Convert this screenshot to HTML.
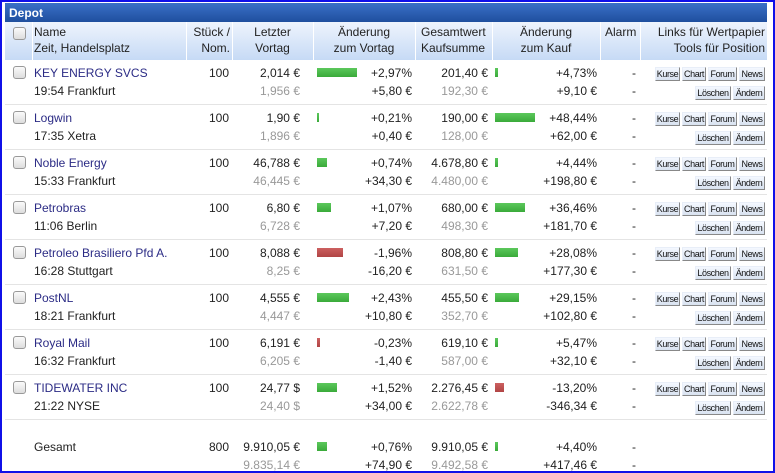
<!DOCTYPE html>
<html><head><meta charset="utf-8"><style>
*{margin:0;padding:0;box-sizing:border-box}
body{width:775px;height:473px;position:relative;overflow:hidden;background:#fff;font-family:"Liberation Sans",Arial,sans-serif;font-size:12px;color:#222}
#frame{position:absolute;left:0;top:0;width:775px;height:473px;border:2px solid #1010e8}
#bar{position:absolute;left:5px;top:3px;width:762px;height:19px;background:linear-gradient(#3a70c8,#1f4f9e);color:#fff;font-weight:bold;font-size:12px;padding:3px 4px}
#hd{position:absolute;left:5px;top:22px;width:762px;height:38px;background:linear-gradient(#eef4fd,#c6daf5)}
.hs{position:absolute;top:22px;height:38px;width:1px;background:#fff}
.a{position:absolute;white-space:nowrap;line-height:16px}
.r{text-align:right}.c{text-align:center}
.cb{position:absolute;width:13px;height:13px;border:1px solid #999;border-radius:3px;background:linear-gradient(#fafafa,#ddd)}
.sep{position:absolute;left:5px;width:762px;height:1px;background:#e4e4e4}
.nm{color:#2b2b85}
.g{color:#999}
.bg{position:absolute;height:9px;background:linear-gradient(#5cc85c,#3aaa3a)}
.br{position:absolute;height:9px;background:linear-gradient(#cc6060,#b04444)}
.bt{position:absolute;height:14px;font-size:9px;line-height:12px;text-align:center;overflow:visible;white-space:nowrap;border:1px solid #e8eef8;border-right-color:#888;border-bottom-color:#888;background:linear-gradient(#f4f8ff,#d8e2f0);color:#111;font-family:"Liberation Sans",sans-serif;letter-spacing:-0.4px}
.bt[style*="left:655px"]{width:25px}
.bt[style*="left:682px"]{width:24px}
.bt[style*="left:708px"]{width:29px}
.bt[style*="left:739px"]{width:26px}
.bt[style*="left:695px"]{width:36px}
.bt[style*="left:733px"]{width:32px}
.dash{position:absolute;left:628px;width:12px;text-align:center}
</style></head><body>
<div id="frame"></div>
<div id="bar">Depot</div>
<div id="hd"></div>
<div class="hs" style="left:32px"></div><div class="hs" style="left:186px"></div><div class="hs" style="left:232px"></div><div class="hs" style="left:313px"></div><div class="hs" style="left:415px"></div><div class="hs" style="left:492px"></div><div class="hs" style="left:600px"></div><div class="hs" style="left:640px"></div>
<div class="cb" style="left:13px;top:27px"></div>
<div class="a" style="left:34px;top:24px">Name<br>Zeit, Handelsplatz</div>
<div class="a r" style="left:186px;width:44px;top:24px">Stück /<br>Nom.</div>
<div class="a c" style="left:232px;width:81px;top:24px">Letzter<br>Vortag</div>
<div class="a c" style="left:313px;width:102px;top:24px">Änderung<br>zum Vortag</div>
<div class="a" style="left:421px;top:24px">Gesamtwert<br>Kaufsumme</div>
<div class="a c" style="left:492px;width:108px;top:24px">Änderung<br>zum Kauf</div>
<div class="a" style="left:605px;top:24px">Alarm</div>
<div class="a r" style="left:640px;width:125px;top:24px">Links für Wertpapier<br>Tools für Position</div>

<div class="cb" style="left:13px;top:66px"></div>
<div class="a nm" style="left:34px;top:65px">KEY ENERGY SVCS</div><div class="a" style="left:34px;top:83px">19:54 Frankfurt</div>
<div class="a r" style="left:186px;width:43px;top:65px">100</div>
<div class="a r" style="left:232px;width:68px;top:65px">2,014 €</div><div class="a r g" style="left:232px;width:68px;top:83px">1,956 €</div>
<div class="bg" style="left:317px;top:68px;width:40px"></div>
<div class="a r" style="left:340px;width:72px;top:65px">+2,97%</div><div class="a r" style="left:340px;width:72px;top:83px">+5,80 €</div>
<div class="a r" style="left:415px;width:73px;top:65px">201,40 €</div><div class="a r g" style="left:415px;width:73px;top:83px">192,30 €</div>
<div class="bg" style="left:495px;top:68px;width:3px"></div>
<div class="a r" style="left:520px;width:77px;top:65px">+4,73%</div><div class="a r" style="left:520px;width:77px;top:83px">+9,10 €</div>
<div class="a dash" style="top:65px">-</div><div class="a dash" style="top:83px">-</div>
<div class="bt" style="left:655px;top:67px">Kurse</div><div class="bt" style="left:682px;top:67px">Chart</div><div class="bt" style="left:708px;top:67px">Forum</div><div class="bt" style="left:739px;top:67px">News</div>
<div class="bt" style="left:695px;top:86px">Löschen</div><div class="bt" style="left:733px;top:86px">Ändern</div>
<div class="sep" style="top:104px"></div>

<div class="cb" style="left:13px;top:111px"></div>
<div class="a nm" style="left:34px;top:110px">Logwin</div><div class="a" style="left:34px;top:128px">17:35 Xetra</div>
<div class="a r" style="left:186px;width:43px;top:110px">100</div>
<div class="a r" style="left:232px;width:68px;top:110px">1,90 €</div><div class="a r g" style="left:232px;width:68px;top:128px">1,896 €</div>
<div class="bg" style="left:317px;top:113px;width:2px"></div>
<div class="a r" style="left:340px;width:72px;top:110px">+0,21%</div><div class="a r" style="left:340px;width:72px;top:128px">+0,40 €</div>
<div class="a r" style="left:415px;width:73px;top:110px">190,00 €</div><div class="a r g" style="left:415px;width:73px;top:128px">128,00 €</div>
<div class="bg" style="left:495px;top:113px;width:40px"></div>
<div class="a r" style="left:520px;width:77px;top:110px">+48,44%</div><div class="a r" style="left:520px;width:77px;top:128px">+62,00 €</div>
<div class="a dash" style="top:110px">-</div><div class="a dash" style="top:128px">-</div>
<div class="bt" style="left:655px;top:112px">Kurse</div><div class="bt" style="left:682px;top:112px">Chart</div><div class="bt" style="left:708px;top:112px">Forum</div><div class="bt" style="left:739px;top:112px">News</div>
<div class="bt" style="left:695px;top:131px">Löschen</div><div class="bt" style="left:733px;top:131px">Ändern</div>
<div class="sep" style="top:149px"></div>

<div class="cb" style="left:13px;top:156px"></div>
<div class="a nm" style="left:34px;top:155px">Noble Energy</div><div class="a" style="left:34px;top:173px">15:33 Frankfurt</div>
<div class="a r" style="left:186px;width:43px;top:155px">100</div>
<div class="a r" style="left:232px;width:68px;top:155px">46,788 €</div><div class="a r g" style="left:232px;width:68px;top:173px">46,445 €</div>
<div class="bg" style="left:317px;top:158px;width:10px"></div>
<div class="a r" style="left:340px;width:72px;top:155px">+0,74%</div><div class="a r" style="left:340px;width:72px;top:173px">+34,30 €</div>
<div class="a r" style="left:415px;width:73px;top:155px">4.678,80 €</div><div class="a r g" style="left:415px;width:73px;top:173px">4.480,00 €</div>
<div class="bg" style="left:495px;top:158px;width:3px"></div>
<div class="a r" style="left:520px;width:77px;top:155px">+4,44%</div><div class="a r" style="left:520px;width:77px;top:173px">+198,80 €</div>
<div class="a dash" style="top:155px">-</div><div class="a dash" style="top:173px">-</div>
<div class="bt" style="left:655px;top:157px">Kurse</div><div class="bt" style="left:682px;top:157px">Chart</div><div class="bt" style="left:708px;top:157px">Forum</div><div class="bt" style="left:739px;top:157px">News</div>
<div class="bt" style="left:695px;top:176px">Löschen</div><div class="bt" style="left:733px;top:176px">Ändern</div>
<div class="sep" style="top:194px"></div>

<div class="cb" style="left:13px;top:201px"></div>
<div class="a nm" style="left:34px;top:200px">Petrobras</div><div class="a" style="left:34px;top:218px">11:06 Berlin</div>
<div class="a r" style="left:186px;width:43px;top:200px">100</div>
<div class="a r" style="left:232px;width:68px;top:200px">6,80 €</div><div class="a r g" style="left:232px;width:68px;top:218px">6,728 €</div>
<div class="bg" style="left:317px;top:203px;width:14px"></div>
<div class="a r" style="left:340px;width:72px;top:200px">+1,07%</div><div class="a r" style="left:340px;width:72px;top:218px">+7,20 €</div>
<div class="a r" style="left:415px;width:73px;top:200px">680,00 €</div><div class="a r g" style="left:415px;width:73px;top:218px">498,30 €</div>
<div class="bg" style="left:495px;top:203px;width:30px"></div>
<div class="a r" style="left:520px;width:77px;top:200px">+36,46%</div><div class="a r" style="left:520px;width:77px;top:218px">+181,70 €</div>
<div class="a dash" style="top:200px">-</div><div class="a dash" style="top:218px">-</div>
<div class="bt" style="left:655px;top:202px">Kurse</div><div class="bt" style="left:682px;top:202px">Chart</div><div class="bt" style="left:708px;top:202px">Forum</div><div class="bt" style="left:739px;top:202px">News</div>
<div class="bt" style="left:695px;top:221px">Löschen</div><div class="bt" style="left:733px;top:221px">Ändern</div>
<div class="sep" style="top:239px"></div>

<div class="cb" style="left:13px;top:246px"></div>
<div class="a nm" style="left:34px;top:245px">Petroleo Brasiliero Pfd A.</div><div class="a" style="left:34px;top:263px">16:28 Stuttgart</div>
<div class="a r" style="left:186px;width:43px;top:245px">100</div>
<div class="a r" style="left:232px;width:68px;top:245px">8,088 €</div><div class="a r g" style="left:232px;width:68px;top:263px">8,25 €</div>
<div class="br" style="left:317px;top:248px;width:26px"></div>
<div class="a r" style="left:340px;width:72px;top:245px">-1,96%</div><div class="a r" style="left:340px;width:72px;top:263px">-16,20 €</div>
<div class="a r" style="left:415px;width:73px;top:245px">808,80 €</div><div class="a r g" style="left:415px;width:73px;top:263px">631,50 €</div>
<div class="bg" style="left:495px;top:248px;width:23px"></div>
<div class="a r" style="left:520px;width:77px;top:245px">+28,08%</div><div class="a r" style="left:520px;width:77px;top:263px">+177,30 €</div>
<div class="a dash" style="top:245px">-</div><div class="a dash" style="top:263px">-</div>
<div class="bt" style="left:655px;top:247px">Kurse</div><div class="bt" style="left:682px;top:247px">Chart</div><div class="bt" style="left:708px;top:247px">Forum</div><div class="bt" style="left:739px;top:247px">News</div>
<div class="bt" style="left:695px;top:266px">Löschen</div><div class="bt" style="left:733px;top:266px">Ändern</div>
<div class="sep" style="top:284px"></div>

<div class="cb" style="left:13px;top:291px"></div>
<div class="a nm" style="left:34px;top:290px">PostNL</div><div class="a" style="left:34px;top:308px">18:21 Frankfurt</div>
<div class="a r" style="left:186px;width:43px;top:290px">100</div>
<div class="a r" style="left:232px;width:68px;top:290px">4,555 €</div><div class="a r g" style="left:232px;width:68px;top:308px">4,447 €</div>
<div class="bg" style="left:317px;top:293px;width:32px"></div>
<div class="a r" style="left:340px;width:72px;top:290px">+2,43%</div><div class="a r" style="left:340px;width:72px;top:308px">+10,80 €</div>
<div class="a r" style="left:415px;width:73px;top:290px">455,50 €</div><div class="a r g" style="left:415px;width:73px;top:308px">352,70 €</div>
<div class="bg" style="left:495px;top:293px;width:24px"></div>
<div class="a r" style="left:520px;width:77px;top:290px">+29,15%</div><div class="a r" style="left:520px;width:77px;top:308px">+102,80 €</div>
<div class="a dash" style="top:290px">-</div><div class="a dash" style="top:308px">-</div>
<div class="bt" style="left:655px;top:292px">Kurse</div><div class="bt" style="left:682px;top:292px">Chart</div><div class="bt" style="left:708px;top:292px">Forum</div><div class="bt" style="left:739px;top:292px">News</div>
<div class="bt" style="left:695px;top:311px">Löschen</div><div class="bt" style="left:733px;top:311px">Ändern</div>
<div class="sep" style="top:329px"></div>

<div class="cb" style="left:13px;top:336px"></div>
<div class="a nm" style="left:34px;top:335px">Royal Mail</div><div class="a" style="left:34px;top:353px">16:32 Frankfurt</div>
<div class="a r" style="left:186px;width:43px;top:335px">100</div>
<div class="a r" style="left:232px;width:68px;top:335px">6,191 €</div><div class="a r g" style="left:232px;width:68px;top:353px">6,205 €</div>
<div class="br" style="left:317px;top:338px;width:3px"></div>
<div class="a r" style="left:340px;width:72px;top:335px">-0,23%</div><div class="a r" style="left:340px;width:72px;top:353px">-1,40 €</div>
<div class="a r" style="left:415px;width:73px;top:335px">619,10 €</div><div class="a r g" style="left:415px;width:73px;top:353px">587,00 €</div>
<div class="bg" style="left:495px;top:338px;width:3px"></div>
<div class="a r" style="left:520px;width:77px;top:335px">+5,47%</div><div class="a r" style="left:520px;width:77px;top:353px">+32,10 €</div>
<div class="a dash" style="top:335px">-</div><div class="a dash" style="top:353px">-</div>
<div class="bt" style="left:655px;top:337px">Kurse</div><div class="bt" style="left:682px;top:337px">Chart</div><div class="bt" style="left:708px;top:337px">Forum</div><div class="bt" style="left:739px;top:337px">News</div>
<div class="bt" style="left:695px;top:356px">Löschen</div><div class="bt" style="left:733px;top:356px">Ändern</div>
<div class="sep" style="top:374px"></div>

<div class="cb" style="left:13px;top:381px"></div>
<div class="a nm" style="left:34px;top:380px">TIDEWATER INC</div><div class="a" style="left:34px;top:398px">21:22 NYSE</div>
<div class="a r" style="left:186px;width:43px;top:380px">100</div>
<div class="a r" style="left:232px;width:68px;top:380px">24,77 $</div><div class="a r g" style="left:232px;width:68px;top:398px">24,40 $</div>
<div class="bg" style="left:317px;top:383px;width:20px"></div>
<div class="a r" style="left:340px;width:72px;top:380px">+1,52%</div><div class="a r" style="left:340px;width:72px;top:398px">+34,00 €</div>
<div class="a r" style="left:415px;width:73px;top:380px">2.276,45 €</div><div class="a r g" style="left:415px;width:73px;top:398px">2.622,78 €</div>
<div class="br" style="left:495px;top:383px;width:9px"></div>
<div class="a r" style="left:520px;width:77px;top:380px">-13,20%</div><div class="a r" style="left:520px;width:77px;top:398px">-346,34 €</div>
<div class="a dash" style="top:380px">-</div><div class="a dash" style="top:398px">-</div>
<div class="bt" style="left:655px;top:382px">Kurse</div><div class="bt" style="left:682px;top:382px">Chart</div><div class="bt" style="left:708px;top:382px">Forum</div><div class="bt" style="left:739px;top:382px">News</div>
<div class="bt" style="left:695px;top:401px">Löschen</div><div class="bt" style="left:733px;top:401px">Ändern</div>
<div class="sep" style="top:419px"></div>

<div class="a" style="left:34px;top:439px">Gesamt</div>
<div class="a r" style="left:186px;width:43px;top:439px">800</div>
<div class="a r" style="left:232px;width:68px;top:439px">9.910,05 €</div><div class="a r g" style="left:232px;width:68px;top:457px">9.835,14 €</div>
<div class="bg" style="left:317px;top:442px;width:10px"></div>
<div class="a r" style="left:340px;width:72px;top:439px">+0,76%</div><div class="a r" style="left:340px;width:72px;top:457px">+74,90 €</div>
<div class="a r" style="left:415px;width:73px;top:439px">9.910,05 €</div><div class="a r g" style="left:415px;width:73px;top:457px">9.492,58 €</div>
<div class="bg" style="left:495px;top:442px;width:3px"></div>
<div class="a r" style="left:520px;width:77px;top:439px">+4,40%</div><div class="a r" style="left:520px;width:77px;top:457px">+417,46 €</div>
<div class="a dash" style="top:439px">-</div><div class="a dash" style="top:457px">-</div>
</body></html>
